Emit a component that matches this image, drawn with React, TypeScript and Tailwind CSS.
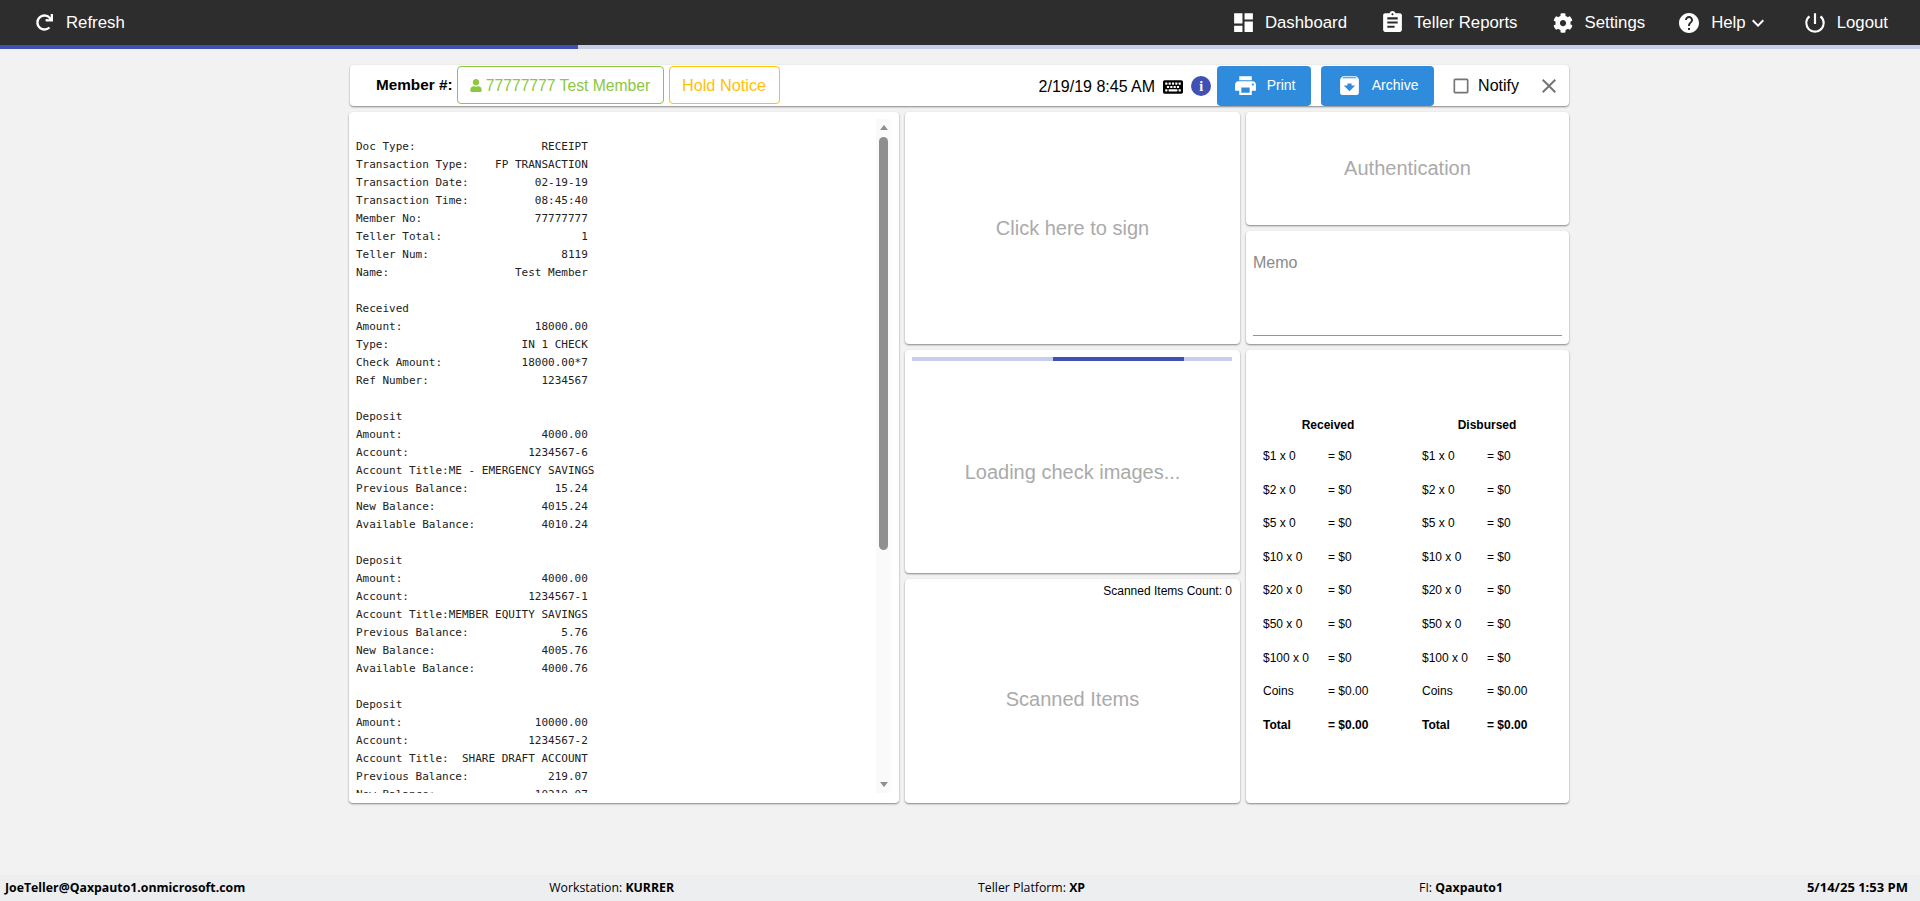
import React from "react";
import { FaRedo, FaUser, FaCog, FaKeyboard } from "react-icons/fa";
import { MdDashboard, MdAssignment, MdHelp, MdPowerSettingsNew, MdArchive, MdPrint, MdKeyboardArrowDown, MdClose, MdCheckBoxOutlineBlank } from "react-icons/md";

const receipt = `Doc Type:                   RECEIPT
Transaction Type:    FP TRANSACTION
Transaction Date:          02-19-19
Transaction Time:          08:45:40
Member No:                 77777777
Teller Total:                     1
Teller Num:                    8119
Name:                   Test Member

Received
Amount:                    18000.00
Type:                    IN 1 CHECK
Check Amount:            18000.00*7
Ref Number:                 1234567

Deposit
Amount:                     4000.00
Account:                  1234567-6
Account Title:ME - EMERGENCY SAVINGS
Previous Balance:             15.24
New Balance:                4015.24
Available Balance:          4010.24

Deposit
Amount:                     4000.00
Account:                  1234567-1
Account Title:MEMBER EQUITY SAVINGS
Previous Balance:              5.76
New Balance:                4005.76
Available Balance:          4000.76

Deposit
Amount:                    10000.00
Account:                  1234567-2
Account Title:  SHARE DRAFT ACCOUNT
Previous Balance:            219.07
New Balance:               10219.07`;

const denoms = ["$1 x 0", "$2 x 0", "$5 x 0", "$10 x 0", "$20 x 0", "$50 x 0", "$100 x 0"];

function Cash({ title }: { title: string }) {
  return (
    <div className="w-[159px] shrink-0 text-[12px] leading-[14px] text-black">
      <div className="h-[14px] w-[130px] text-center font-bold">{title}</div>
      <div className="mt-[17px] flex flex-col gap-[19.6px]">
        {denoms.map((d) => (
          <div key={d} className="flex h-[14px]">
            <span className="w-[65px]">{d}</span>
            <span>= $0</span>
          </div>
        ))}
        <div className="flex h-[14px]">
          <span className="w-[65px]">Coins</span>
          <span>= $0.00</span>
        </div>
        <div className="flex h-[14px] font-bold">
          <span className="w-[65px]">Total</span>
          <span>= $0.00</span>
        </div>
      </div>
    </div>
  );
}

const card = "rounded-[4px] bg-white shadow-[0_1px_2px_rgba(0,0,0,0.45)]";

export default function App() {
  return (
    <div className="flex h-[901px] flex-col overflow-hidden bg-[#f2f2f2] font-['Liberation_Sans',sans-serif]">
      <header className="flex h-[45px] items-center justify-between bg-[#2d2d2d] pl-[36px] pr-[32px] text-[16.8px] text-white">
        <div className="flex items-center gap-[13px]">
          <FaRedo className="h-[17px] w-[17px]" />
          <span>Refresh</span>
        </div>
        <div className="flex items-center">
          <div className="flex items-center gap-[9px]">
            <MdDashboard className="h-[25px] w-[25px]" />
            <span>Dashboard</span>
          </div>
          <div className="ml-[33px] flex items-center gap-[9px]">
            <MdAssignment className="h-[25px] w-[25px]" />
            <span>Teller Reports</span>
          </div>
          <div className="ml-[35px] flex items-center gap-[12px]">
            <FaCog className="h-[20px] w-[20px]" />
            <span>Settings</span>
          </div>
          <div className="ml-[32px] flex items-center gap-[10px]">
            <MdHelp className="h-[24px] w-[24px]" />
            <span>Help</span>
            <MdKeyboardArrowDown className="-ml-[10px] h-[24px] w-[24px]" />
          </div>
          <div className="ml-[32px] flex items-center gap-[9px]">
            <MdPowerSettingsNew className="h-[26px] w-[26px]" />
            <span>Logout</span>
          </div>
        </div>
      </header>
      <div className="flex h-[4px] bg-[#c8cde9]">
        <div className="w-[578px] bg-[#3f51b5]" />
      </div>

      <main className="mx-auto mt-[16px] flex w-[1222px] flex-col">
        <div className={`${card} ml-[1px] flex h-[41px] w-[1219px] items-center pl-[26px] pr-[8px] text-[16px]`}>
          <span className="mr-[4px] text-[15.3px] font-bold text-black">Member #:</span>
          <div className="mb-[1px] flex h-[38px] w-[207px] items-center justify-center gap-[4px] rounded-[4px] border border-[#8dc63f] pt-[1px] text-[15.7px] text-[#8dc63f]">
            <FaUser className="h-[13px] w-[12px]" />
            <span>77777777 Test Member</span>
          </div>
          <div className="mb-[1px] ml-[5px] flex h-[38px] w-[111px] items-center justify-center rounded-[4px] border border-[#ffc107] pt-[1px] text-[16.3px] text-[#ffc107]">Hold Notice</div>
          <span className="ml-auto mt-[3px] text-[16px] text-black">2/19/19 8:45 AM</span>
          <FaKeyboard className="ml-[8px] mt-[2px] h-[20px] w-[20px] text-black" />
          <div className="ml-[8px] mt-[1px] flex h-[20px] w-[20px] items-center justify-center rounded-full bg-[#3f51b5] font-['Liberation_Serif',serif] text-[14px] font-bold text-white">i</div>
          <button className="ml-[6px] flex h-[40px] w-[94px] items-center justify-center gap-[9px] rounded-[4px] bg-[#2f8cdc] text-[14px] text-white">
            <MdPrint className="h-[25px] w-[25px]" /> Print
          </button>
          <button className="ml-[10px] flex h-[40px] w-[113px] items-center justify-center gap-[10px] rounded-[4px] bg-[#2f8cdc] text-[14px] text-white">
            <MdArchive className="h-[25px] w-[25px]" /> Archive
          </button>
          <MdCheckBoxOutlineBlank className="ml-[17px] h-[20px] w-[20px] text-[#757575]" />
          <span className="ml-[7px] text-[16px] text-black">Notify</span>
          <MdClose className="ml-[18px] h-[24px] w-[24px] text-[#757575]" />
        </div>

        <div className="mt-[6px] flex h-[691px] gap-[6px]">
          <div className={`${card} flex w-[550px] pr-[8px] pt-[7px]`}>
            <pre className="h-[674px] flex-1 overflow-hidden pl-[7px] pt-[19px] font-['DejaVu_Sans_Mono',monospace] text-[11px] leading-[18px] text-[#222]">{receipt}</pre>
            <div className="flex h-[674px] w-[15px] flex-col items-center bg-[#fafafa] pt-[6px]">
              <div className="h-0 w-0 border-x-[4px] border-b-[5px] border-x-transparent border-b-[#8f8f8f]" />
              <div className="mt-[7px] h-[413px] w-[9px] rounded-full bg-[#8f8f8f]" />
              <div className="mt-auto mb-[6px] h-0 w-0 border-x-[4px] border-t-[5px] border-x-transparent border-t-[#8f8f8f]" />
            </div>
          </div>

          <div className="flex w-[335px] flex-col gap-[6px]">
            <div className={`${card} flex h-[232px] items-center justify-center text-[20px] text-[#aaa]`}>Click here to sign</div>
            <div className={`${card} flex h-[223px] flex-col px-[7px] pt-[7px]`}>
              <div className="flex h-[4px] w-[320px] bg-[#c8cde9]">
                <div className="ml-[141px] w-[131px] bg-[#3f51b5]" />
              </div>
              <div className="flex flex-1 items-center justify-center pt-[9px] text-[20px] text-[#aaa]">Loading check images...</div>
            </div>
            <div className={`${card} flex flex-1 flex-col`}>
              <div className="pr-[8px] pt-[5px] text-right text-[12px] leading-[14px] text-black">Scanned Items Count: 0</div>
              <div className="flex flex-1 items-center justify-center pb-[3px] text-[20px] text-[#aaa]">Scanned Items</div>
            </div>
          </div>

          <div className="flex w-[323px] flex-col gap-[6px]">
            <div className={`${card} flex h-[113px] items-center justify-center pb-[2px] text-[20px] text-[#aaa]`}>Authentication</div>
            <div className={`${card} flex h-[113px] flex-col px-[7px] pt-[23px]`}>
              <span className="text-[16px] leading-[18px] text-[#8a8a8a]">Memo</span>
              <div className="mt-auto mb-[8px] h-px bg-[#949494]" />
            </div>
            <div className={`${card} flex flex-1 pl-[17px] pt-[68px]`}>
              <Cash title="Received" />
              <Cash title="Disbursed" />
            </div>
          </div>
        </div>
      </main>

      <footer className="mt-auto flex h-[26px] items-center justify-between bg-[#eceef0] pl-[5px] pr-[12px] font-['Open_Sans',sans-serif] text-[12.3px] text-black">
        <b>JoeTeller@Qaxpauto1.onmicrosoft.com</b>
        <span>Workstation: <b>KURRER</b></span>
        <span>Teller Platform: <b>XP</b></span>
        <span className="ml-[30px]">FI: <b>Qaxpauto1</b></span>
        <b className="text-[13px]">5/14/25 1:53 PM</b>
      </footer>
    </div>
  );
}
